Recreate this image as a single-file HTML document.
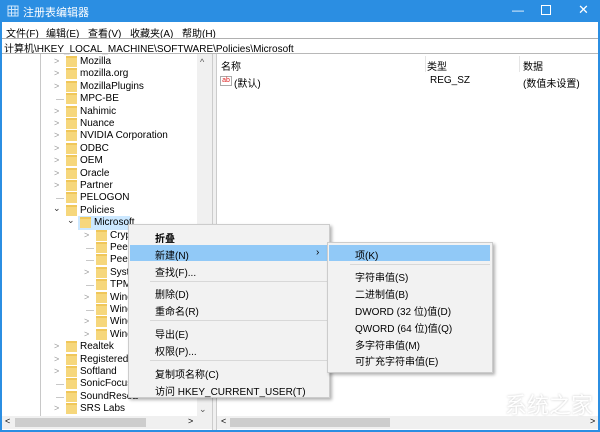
<!DOCTYPE html><html><head><meta charset="utf-8"><style>
*{margin:0;padding:0;box-sizing:border-box}
body{width:600px;height:432px;overflow:hidden;background:#fff;font-family:"Liberation Sans","Noto Sans CJK SC",sans-serif;font-size:10px;color:#000;position:relative}
.a{position:absolute;white-space:nowrap}
.f{position:absolute;width:11px;height:11px;background:#f6d77c;border-top:2px solid #f0c75a}
.ar{position:absolute;color:#999;font-size:9px}
.ln{position:absolute;background:#c8c8c8}
</style></head><body>
<div class="a" style="left:0;top:0;width:600px;height:22px;background:#2b8ee2"></div>
<div class="a" style="left:0;top:0;width:2px;height:432px;background:#2b8ee2"></div>
<div class="a" style="right:0;top:0;width:2px;height:432px;background:#2b8ee2"></div>
<div class="a" style="left:0;bottom:0;width:600px;height:2px;background:#2b8ee2"></div>
<svg class="a" style="left:7px;top:5px" width="12" height="12"><g fill="none" stroke="#cfe6fb" stroke-width="1"><rect x="1" y="1" width="10" height="10"/><path d="M1 4.5h10M1 8h10M4.5 1v10M8 1v10"/></g></svg>
<div class="a" style="left:23px;top:4px;color:#fff;font-size:11px">注册表编辑器</div>
<div class="a" style="left:512px;top:3px;color:#fff;font-size:12px">—</div>
<div class="a" style="left:541px;top:5px;width:10px;height:10px;border:1px solid #fff"></div>
<div class="a" style="left:578px;top:2px;color:#fff;font-size:13px">✕</div>
<div class="a" style="left:6px;top:25px">文件(F)</div>
<div class="a" style="left:46px;top:25px">编辑(E)</div>
<div class="a" style="left:88px;top:25px">查看(V)</div>
<div class="a" style="left:130px;top:25px">收藏夹(A)</div>
<div class="a" style="left:182px;top:25px">帮助(H)</div>
<div class="a" style="left:2px;top:38px;width:596px;height:1px;background:#b0b0b0"></div>
<div class="a" style="left:4px;top:40px">计算机\HKEY_LOCAL_MACHINE\SOFTWARE\Policies\Microsoft</div>
<div class="a" style="left:2px;top:53px;width:596px;height:1px;background:#b8b8b8"></div>
<div class="a" style="left:212px;top:54px;width:5px;height:376px;background:#f0f0f0;border-left:1px solid #ccc;border-right:1px solid #ccc"></div>
<div class="a" style="left:197px;top:54px;width:15px;height:362px;background:#f0f0f0"></div>
<div class="a" style="left:200px;top:57px;font-size:9px;color:#555">^</div>
<div class="a" style="left:199px;top:404px;font-size:9px;color:#555">⌄</div>
<div class="a" style="left:2px;top:416px;width:210px;height:13px;background:#f0f0f0"></div>
<div class="a" style="left:15px;top:418px;width:131px;height:9px;background:#cdcdcd"></div>
<div class="a" style="left:5px;top:416px;font-size:9px">&lt;</div>
<div class="a" style="left:188px;top:416px;font-size:9px">&gt;</div>
<div class="a" style="left:217px;top:416px;width:381px;height:13px;background:#f0f0f0"></div>
<div class="a" style="left:230px;top:418px;width:160px;height:9px;background:#cdcdcd"></div>
<div class="a" style="left:221px;top:416px;font-size:9px">&lt;</div>
<div class="a" style="left:590px;top:416px;font-size:9px">&gt;</div>
<div class="ln" style="left:40px;top:54px;width:1px;height:362px"></div>
<div class="a" style="left:78px;top:216px;width:52px;height:14px;background:#cce8ff"></div>
<div id="tree"></div>
<div class="a" style="left:221px;top:58px">名称</div>
<div class="a" style="left:425px;top:56px;width:1px;height:16px;background:#e5e5e5"></div>
<div class="a" style="left:427px;top:58px">类型</div>
<div class="a" style="left:519px;top:56px;width:1px;height:16px;background:#e5e5e5"></div>
<div class="a" style="left:523px;top:58px">数据</div>
<div class="a" style="left:220px;top:76px;width:12px;height:10px;border:1px solid #aaa;color:#d22;font-size:7px;line-height:8px;text-align:center">ab</div>
<div class="a" style="left:234px;top:75px">(默认)</div>
<div class="a" style="left:430px;top:75px">REG_SZ</div>
<div class="a" style="left:523px;top:75px">(数值未设置)</div>
<div class="a" style="left:128px;top:224px;width:202px;height:174px;background:#f2f2f2;border:1px solid #ccc;box-shadow:2px 2px 3px rgba(0,0,0,.3)"></div>
<div class="a" style="left:130px;top:245px;width:197px;height:16px;background:#91c9f7"></div>
<div class="a" style="left:155px;top:230px;font-weight:bold">折叠</div>
<div class="a" style="left:155px;top:247px">新建(N)</div>
<div class="a" style="left:316px;top:247px">›</div>
<div class="a" style="left:155px;top:264px">查找(F)...</div>
<div class="a" style="left:150px;top:281px;width:177px;height:1px;background:#d8d8d8"></div>
<div class="a" style="left:155px;top:286px">删除(D)</div>
<div class="a" style="left:155px;top:303px">重命名(R)</div>
<div class="a" style="left:150px;top:320px;width:177px;height:1px;background:#d8d8d8"></div>
<div class="a" style="left:155px;top:326px">导出(E)</div>
<div class="a" style="left:155px;top:343px">权限(P)...</div>
<div class="a" style="left:150px;top:360px;width:177px;height:1px;background:#d8d8d8"></div>
<div class="a" style="left:155px;top:366px">复制项名称(C)</div>
<div class="a" style="left:155px;top:383px">访问 HKEY_CURRENT_USER(T)</div>
<div class="a" style="left:327px;top:242px;width:166px;height:131px;background:#f2f2f2;border:1px solid #ccc;box-shadow:2px 2px 3px rgba(0,0,0,.3)"></div>
<div class="a" style="left:329px;top:245px;width:161px;height:16px;background:#91c9f7"></div>
<div class="a" style="left:355px;top:247px">项(K)</div>
<div class="a" style="left:350px;top:264px;width:140px;height:1px;background:#d8d8d8"></div>
<div class="a" style="left:355px;top:269px">字符串值(S)</div>
<div class="a" style="left:355px;top:286px">二进制值(B)</div>
<div class="a" style="left:355px;top:303px">DWORD (32 位)值(D)</div>
<div class="a" style="left:355px;top:320px">QWORD (64 位)值(Q)</div>
<div class="a" style="left:355px;top:337px">多字符串值(M)</div>
<div class="a" style="left:355px;top:353px">可扩充字符串值(E)</div>
<div class="a" style="left:505px;top:388px;color:#fff;font-size:22px;opacity:.85;text-shadow:0 0 2px #bbb">系统之家</div>
<script>
var items=[["Mozilla",0,1],["mozilla.org",0,1],["MozillaPlugins",0,1],["MPC-BE",0,0],["Nahimic",0,1],["Nuance",0,1],["NVIDIA Corporation",0,1],["ODBC",0,1],["OEM",0,1],["Oracle",0,1],["Partner",0,1],["PELOGON",0,0],["Policies",0,2],["Microsoft",1,2],["Crypt",2,1],["Peer",2,0],["Peer",2,0],["Syste",2,1],["TPM",2,0],["Wind",2,1],["Wind",2,0],["Wind",2,1],["Wind",2,1],["Realtek",0,1],["RegisteredAp",0,1],["Softland",0,1],["SonicFocus",0,0],["SoundResea",0,0],["SRS Labs",0,1]];
var h="";
items.forEach(function(it,i){var y=56+i*12.4;var x=[66,80,96][it[1]];
var ax=x-12;
if(it[2]==1)h+='<div class="ar" style="left:'+ax+'px;top:'+(y)+'px">&gt;</div>';
else if(it[2]==2)h+='<div class="ar" style="left:'+(ax-1)+'px;top:'+(y-2)+'px;color:#333">⌄</div>';
else h+='<div class="ln" style="left:'+(ax+2)+'px;top:'+(y+6)+'px;width:8px;height:1px"></div>';
h+='<div class="f" style="left:'+x+'px;top:'+(y)+'px"></div>';
h+='<div class="a" style="left:'+(x+14)+'px;top:'+y+'px">'+it[0]+'</div>';});
document.getElementById("tree").innerHTML=h;
</script>
</body></html>
